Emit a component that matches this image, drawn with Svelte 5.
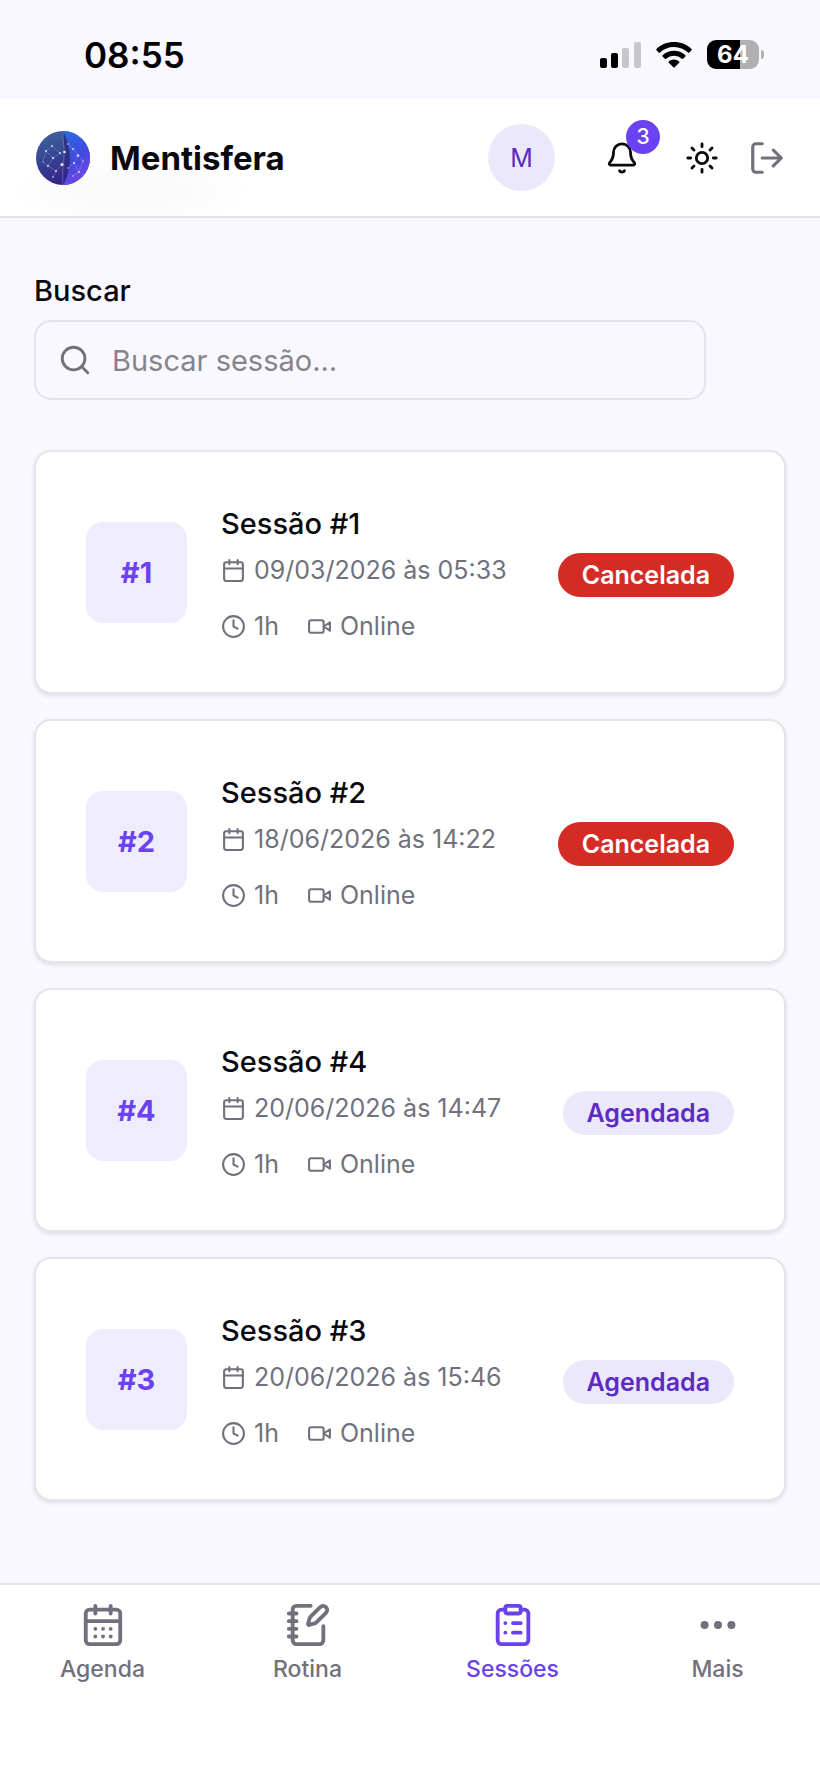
<script lang="ts">
  type Status = 'cancelada' | 'agendada';

  interface Session {
    id: number;
    date: string;
    duration: string;
    mode: string;
    status: Status;
  }

  const sessions: Session[] = [
    { id: 1, date: '09/03/2026 às 05:33', duration: '1h', mode: 'Online', status: 'cancelada' },
    { id: 2, date: '18/06/2026 às 14:22', duration: '1h', mode: 'Online', status: 'cancelada' },
    { id: 4, date: '20/06/2026 às 14:47', duration: '1h', mode: 'Online', status: 'agendada' },
    { id: 3, date: '20/06/2026 às 15:46', duration: '1h', mode: 'Online', status: 'agendada' }
  ];

  const statusLabels: Record<Status, string> = {
    cancelada: 'Cancelada',
    agendada: 'Agendada'
  };

  const tabs = [
    { id: 'agenda', label: 'Agenda' },
    { id: 'rotina', label: 'Rotina' },
    { id: 'sessoes', label: 'Sessões' },
    { id: 'mais', label: 'Mais' }
  ];

  let query = $state('');
  let activeTab = $state('sessoes');

  let visible = $derived(
    sessions.filter((s) => `sessão #${s.id}`.includes(query.trim().toLowerCase()))
  );
</script>

<div class="app">
  <div class="status-bar">
    <span class="time">08:55</span>
    <div class="indicators">
      <svg width="41" height="28" viewBox="0 0 41 28">
        <rect x="0" y="17" width="7" height="10" rx="2" />
        <rect x="11" y="12" width="7" height="15" rx="2" />
        <rect x="22" y="7" width="7" height="20" rx="2" fill="#c7c7cb" />
        <rect x="34" y="1" width="7" height="26" rx="2" fill="#c7c7cb" />
      </svg>
      <svg width="36" height="28" viewBox="0 0 36 28">
        <path d="M18 1C11.200 1 5 3.600 .5 7.900c-.4.4-.4.900 0 1.300l2.200 2.200c.4.4.9.4 1.300 0A20.300 20.300 0 0 1 18 5.900c5.400 0 10.300 2.100 14 5.500.4.400.9.400 1.300 0l2.200-2.200c.4-.4.4-.9 0-1.300C31 3.600 24.800 1 18 1z" />
        <path d="M18 9.800c-4.400 0-8.400 1.700-11.400 4.400-.4.400-.4.900 0 1.300l2.300 2.300c.3.300.8.300 1.200 0a11.800 11.800 0 0 1 15.800 0c.4.300.9.300 1.200 0l2.300-2.300c.4-.4.4-.9 0-1.300A17 17 0 0 0 18 9.800z" />
        <path d="M18 18.600c-2 0-3.800.7-5.200 1.900-.4.400-.4.900 0 1.300l4.500 4.500c.4.400 1 .4 1.400 0l4.500-4.500c.4-.4.4-.9 0-1.300a8 8 0 0 0-5.200-1.900z" />
      </svg>
      <div class="battery">
        <span class="battery-level">64</span>
        <span class="battery-tip"></span>
      </div>
    </div>
  </div>

  <header class="header">
    <a class="brand" href="/">
      <svg class="logo" width="54" height="54" viewBox="0 0 54 54">
        <defs>
          <linearGradient id="logo-left" x1="0" y1="0" x2="0.3" y2="1">
            <stop offset="0" stop-color="#41659f" />
            <stop offset="0.5" stop-color="#354792" />
            <stop offset="1" stop-color="#37238a" />
          </linearGradient>
          <linearGradient id="logo-right" x1="0.3" y1="0" x2="0.7" y2="1">
            <stop offset="0" stop-color="#2f69e0" />
            <stop offset="0.5" stop-color="#4049dd" />
            <stop offset="1" stop-color="#7b48e8" />
          </linearGradient>
        </defs>
        <circle cx="27" cy="27" r="27" fill="url(#logo-left)" />
        <path d="M27 0a27 27 0 0 1 0 54C36 38 36 16 27 0z" fill="url(#logo-right)" />
        <path d="M27 0C36 16 36 38 27 54 30 38 29 20 27 0z" fill="#2d2680" opacity="0.7" />
        <path
          d="M27 0c-1 9 2 16 1 25s-2 18-1 29M7 31l3-11 6-5 8 7-7 5-5 8-5-4M10 20l7 7M12 35l8 5 6-7M20 40l-3 6M32 13l5 5 5 6-4 8-6 5M42 24l5 6-4 11-6 4M38 32l5 9"
          fill="none"
          stroke="#b7bdf0"
          stroke-width="0.6"
          opacity="0.5"
        />
        <g fill="#e6e8ff">
          <circle cx="10" cy="20" r="0.9" />
          <circle cx="16" cy="15" r="0.9" />
          <circle cx="24" cy="22" r="0.9" />
          <circle cx="17" cy="27" r="1.100" />
          <circle cx="12" cy="35" r="1" />
          <circle cx="7" cy="31" r="0.6" />
          <circle cx="20" cy="40" r="0.9" />
          <circle cx="17" cy="46" r="0.8" />
          <circle cx="28.500" cy="21" r="1.300" />
          <circle cx="26" cy="33.500" r="1.500" />
          <circle cx="32" cy="13" r="0.8" />
          <circle cx="37" cy="18" r="0.9" />
          <circle cx="42" cy="24.500" r="1.200" />
          <circle cx="38" cy="32" r="1" />
          <circle cx="32" cy="37" r="0.7" />
          <circle cx="47" cy="30" r="0.7" />
          <circle cx="43" cy="41" r="0.9" />
          <circle cx="37" cy="45" r="0.7" />
        </g>
      </svg>
      <span>Mentisfera</span>
    </a>

    <div class="actions">
      <button class="avatar" type="button" aria-label="Perfil">M</button>
      <button class="icon-btn bell" type="button" aria-label="Notificações">
        <svg class="icon" width="34" height="34" viewBox="0 0 24 24">
          <path d="M10.268 21a2 2 0 0 0 3.464 0" />
          <path d="M3.262 15.326A1 1 0 0 0 4 17h16a1 1 0 0 0 .74-1.673C19.410 13.956 18 12.499 18 8A6 6 0 0 0 6 8c0 4.499-1.411 5.956-2.738 7.326" />
        </svg>
        <span class="count">3</span>
      </button>
      <button class="icon-btn sun" type="button" aria-label="Alternar tema">
        <svg class="icon" width="34" height="34" viewBox="0 0 24 24">
          <circle cx="12" cy="12" r="4" />
          <path d="M12 2v2M12 20v2M4.930 4.930l1.410 1.410M17.660 17.660l1.410 1.410M2 12h2M20 12h2M6.340 17.660l-1.410 1.410M19.070 4.930l-1.410 1.410" />
        </svg>
      </button>
      <button class="icon-btn logout" type="button" aria-label="Sair">
        <svg class="icon" width="38" height="38" viewBox="0 0 24 24">
          <path d="M9 21H5a2 2 0 0 1-2-2V5a2 2 0 0 1 2-2h4M16 17l5-5-5-5M21 12H9" />
        </svg>
      </button>
    </div>
  </header>

  <main class="content">
    <div class="search">
      <label for="search">Buscar</label>
      <div class="search-box">
        <svg class="icon" width="34" height="34" viewBox="0 0 24 24">
          <circle cx="11" cy="11" r="8" />
          <path d="m21 21-4.340-4.340" />
        </svg>
        <input id="search" type="text" placeholder="Buscar sessão..." bind:value={query} />
      </div>
    </div>

    <ul class="sessions">
      {#each visible as session (session.id)}
        <li class="card">
          <div class="tile">#{session.id}</div>
          <div class="info">
            <h2>Sessão #{session.id}</h2>
            <p class="meta date">
              <svg class="icon" width="25" height="25" viewBox="0 0 24 24">
                <path d="M8 2v4M16 2v4M3 10h18" />
                <rect x="3" y="4" width="18" height="18" rx="2" />
              </svg>
              {session.date}
            </p>
            <div class="details">
              <p class="meta">
                <svg class="icon" width="25" height="25" viewBox="0 0 24 24">
                  <circle cx="12" cy="12" r="10" />
                  <path d="M12 6v6l4 2" />
                </svg>
                {session.duration}
              </p>
              <p class="meta">
                <svg class="icon" width="25" height="25" viewBox="0 0 24 24">
                  <path d="m22 8-6 4 6 4V8Z" />
                  <rect x="2" y="6" width="14" height="12" rx="2" />
                </svg>
                {session.mode}
              </p>
            </div>
          </div>
          <div class="status">
            <span class="badge {session.status}">{statusLabels[session.status]}</span>
          </div>
        </li>
      {/each}
    </ul>
  </main>

  <nav class="tabs">
    {#each tabs as tab (tab.id)}
      <button
        type="button"
        class="tab"
        class:active={activeTab === tab.id}
        onclick={() => (activeTab = tab.id)}
      >
        <svg class="icon" width="46" height="46" viewBox="0 0 24 24">
          {#if tab.id === 'agenda'}
            <path d="M8 2v4M16 2v4M3 10h18" />
            <rect x="3" y="4" width="18" height="18" rx="2" />
            <path d="M8 14h.01M12 14h.01M16 14h.01M8 18h.01M12 18h.01M16 18h.01" />
          {:else if tab.id === 'rotina'}
            <path d="M13.400 2H6a2 2 0 0 0-2 2v16a2 2 0 0 0 2 2h12a2 2 0 0 0 2-2v-7.400M2 6h4M2 10h4M2 14h4M2 18h4" />
            <path d="M21.378 5.626a1 1 0 1 0-3.004-3.004l-5.010 5.012a2 2 0 0 0-.506.854l-.837 2.870a.5.5 0 0 0 .620.620l2.870-.837a2 2 0 0 0 .854-.506z" />
          {:else if tab.id === 'sessoes'}
            <rect x="8" y="2" width="8" height="4" rx="1" />
            <path d="M16 4h2a2 2 0 0 1 2 2v14a2 2 0 0 1-2 2H6a2 2 0 0 1-2-2V6a2 2 0 0 1 2-2h2M12 11h4M12 16h4M8 11h.01M8 16h.01" />
          {:else}
            <g fill="currentColor" stroke="none">
              <circle cx="5" cy="12" r="2.100" />
              <circle cx="12" cy="12" r="2.100" />
              <circle cx="19" cy="12" r="2.100" />
            </g>
          {/if}
        </svg>
        {tab.label}
      </button>
    {/each}
  </nav>
</div>

<style>
  :global(body) {
    margin: 0;
    background: #f9f8fe;
  }

  .app {
    display: flex;
    flex-direction: column;
    min-height: 100vh;
    background: #f9f8fe;
    color: #09090f;
    font-family: Inter, 'Liberation Sans', sans-serif;
  }

  button {
    padding: 0;
    border: none;
    background: none;
    color: inherit;
    font-family: inherit;
    cursor: pointer;
  }

  .icon {
    display: block;
    flex-shrink: 0;
    fill: none;
    stroke: currentColor;
    stroke-width: 2;
    stroke-linecap: round;
    stroke-linejoin: round;
  }

  .status-bar {
    display: flex;
    align-items: center;
    justify-content: space-between;
    box-sizing: border-box;
    height: 99px;
    padding: 10px 56px 0 84px;
    color: #000;
  }

  .time {
    font-size: 35px;
    font-weight: 600;
    line-height: 42px;
  }

  .indicators {
    display: flex;
    align-items: center;
    gap: 15px;
  }

  .battery {
    display: flex;
    align-items: center;
    gap: 2px;
  }

  .battery-level {
    width: 52px;
    border-radius: 9px;
    background: linear-gradient(to right, #000 64%, #b0b0b2 64%);
    color: #fff;
    font-size: 24px;
    font-weight: 700;
    line-height: 29px;
    text-align: center;
  }

  .battery-tip {
    width: 3px;
    height: 9px;
    border-radius: 0 4px 4px 0;
    background: #b0b0b2;
  }

  .header {
    display: flex;
    align-items: center;
    justify-content: space-between;
    padding: 25px 34px;
    border-bottom: 2px solid #e5e4eb;
    background: radial-gradient(ellipse 120px 36px at 130px 92px, #fbfbfc 50%, #fff 100%);
  }

  .brand {
    display: flex;
    align-items: center;
    gap: 20px;
    padding-left: 2px;
    color: inherit;
    font-size: 33px;
    font-weight: 650;
    text-decoration: none;
  }

  .actions {
    display: flex;
    align-items: center;
  }

  .avatar {
    width: 67px;
    height: 67px;
    margin-right: 50px;
    border-radius: 50%;
    background: #ece8fc;
    color: #5b2bc4;
    font-size: 25px;
  }

  .bell {
    position: relative;
    margin-right: 46px;
  }

  .count {
    position: absolute;
    top: -21px;
    right: -21px;
    width: 34px;
    border-radius: 50%;
    background: #6a42f2;
    color: #fff;
    font-size: 21px;
    font-weight: 500;
    line-height: 34px;
  }

  .sun {
    margin-right: 29px;
  }

  .logout {
    color: #71717d;
  }

  .content {
    flex: 1;
    padding: 52px 34px 50px;
  }

  .search {
    max-width: 672px;
    margin-bottom: 50px;
  }

  label {
    display: block;
    margin-bottom: 8px;
    font-size: 29px;
    font-weight: 500;
    line-height: 42px;
  }

  .search-box {
    display: flex;
    align-items: center;
    gap: 20px;
    padding: 0 22px;
    border: 2px solid #e5e4eb;
    border-radius: 17px;
    color: #71717d;
  }

  input {
    flex: 1;
    min-width: 0;
    height: 76px;
    padding: 0;
    border: none;
    outline: none;
    background: none;
    color: #09090f;
    font-family: inherit;
    font-size: 29px;
  }

  input::placeholder {
    color: #85858b;
    opacity: 1;
  }

  .sessions {
    display: flex;
    flex-direction: column;
    gap: 25px;
    margin: 0;
    padding: 0;
    list-style: none;
  }

  .card {
    display: flex;
    align-items: center;
    gap: 34px;
    padding: 50px;
    border: 2px solid #e5e4eb;
    border-radius: 17px;
    background: #fff;
    box-shadow: 0 2px 4px rgba(0, 0, 0, 0.1);
  }

  .tile {
    flex-shrink: 0;
    width: 101px;
    border-radius: 17px;
    background: #efecfd;
    color: #6a42f2;
    font-size: 29px;
    font-weight: 700;
    line-height: 101px;
    text-align: center;
  }

  .info {
    flex: 1;
    min-width: 0;
  }

  h2 {
    margin: 0 0 8px;
    font-size: 29px;
    font-weight: 500;
    line-height: 44px;
  }

  .meta {
    display: flex;
    align-items: center;
    gap: 8px;
    margin: 0;
    color: #71717d;
    font-size: 25px;
    line-height: 32px;
    white-space: nowrap;
  }

  .date {
    margin-bottom: 24px;
  }

  .details {
    display: flex;
    gap: 28px;
  }

  .status {
    padding-top: 6px;
  }

  .badge {
    display: block;
    padding: 0 24px;
    border-radius: 22px;
    font-size: 25px;
    font-weight: 600;
    line-height: 44px;
  }

  .cancelada {
    background: #d42c25;
    color: #fff;
  }

  .agendada {
    background: #ece8fc;
    color: #5b2bc4;
  }

  .tabs {
    display: grid;
    grid-template-columns: repeat(4, 1fr);
    padding: 17px 0 90px;
    border-top: 2px solid #e5e4eb;
    background: #fff;
  }

  .tab {
    display: flex;
    flex-direction: column;
    align-items: center;
    gap: 7px;
    color: #71717d;
    font-size: 23px;
    font-weight: 500;
    line-height: 29px;
  }

  .tab.active {
    color: #6a42e8;
  }
</style>
